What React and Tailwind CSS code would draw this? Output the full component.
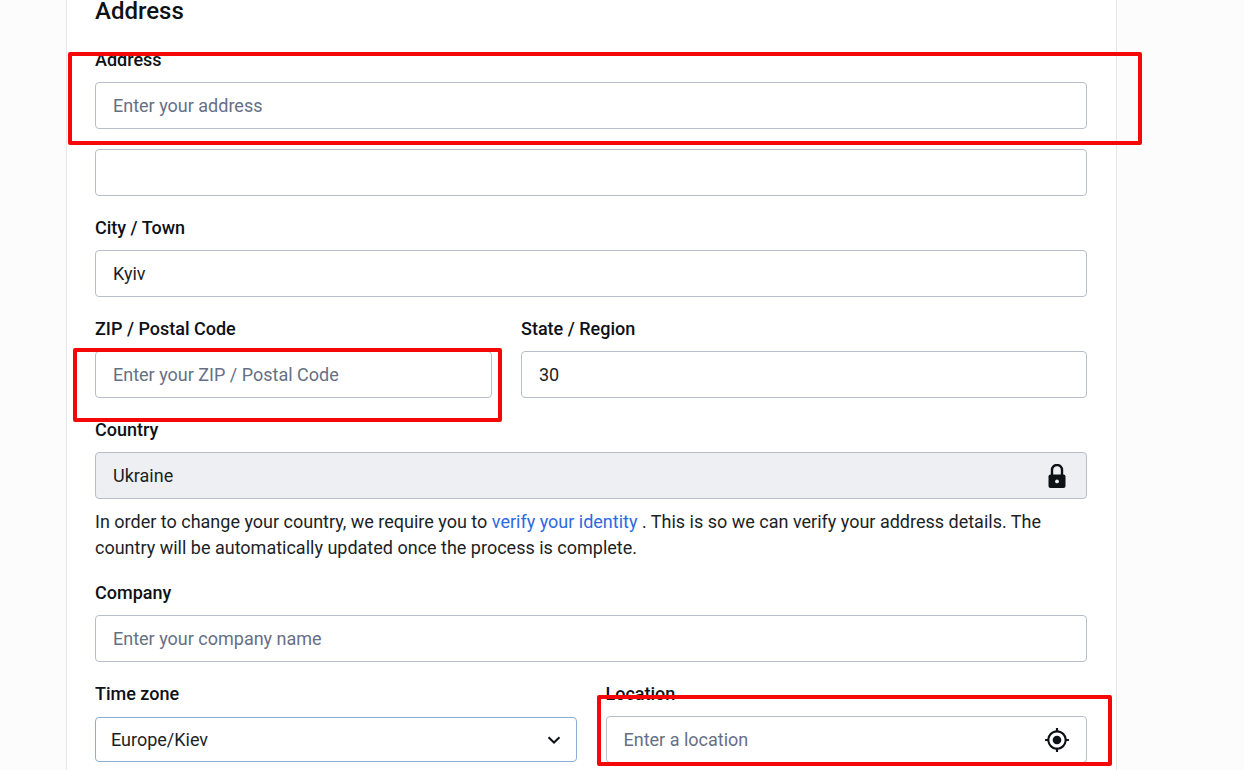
import { MdMyLocation } from 'react-icons/md';

const control =
  'block w-full h-[47px] rounded-[4px] border border-[#b7bec9] bg-white px-[17px] text-[18px] text-[#1c1f26] placeholder:text-[#667085] placeholder:opacity-100 outline-none focus:border-[#7fa6d9]';

function Label({ htmlFor, children }) {
  return (
    <label htmlFor={htmlFor} className="mb-[9px] block text-[18px] leading-[26px] font-medium text-[#0e1116]">
      {children}
    </label>
  );
}

function Field({ id, label, children, ...props }) {
  return (
    <div className="relative">
      <Label htmlFor={id}>{label}</Label>
      <input id={id} type="text" className={control} {...props} />
      {children}
    </div>
  );
}

function Highlight({ className }) {
  return (
    <div
      aria-hidden="true"
      className={`pointer-events-none absolute rounded-[2px] border-4 border-[#f40808] ${className}`}
    />
  );
}

function LockIcon() {
  return (
    <svg width="18" height="24" viewBox="0 0 18 24" aria-hidden="true">
      <path d="M4 11V6a5 5 0 0 1 10 0v5" fill="none" stroke="#0e1116" strokeWidth="2.4" />
      <rect x="0.5" y="10.5" width="17" height="13.5" rx="2" fill="#0e1116" />
      <circle cx="9" cy="17.4" r="1.9" fill="#eeeff3" />
    </svg>
  );
}

export default function App() {
  return (
    <div className="min-h-screen overflow-x-hidden bg-[#fcfcfc] pr-[127px] pl-[66px] font-['Roboto',sans-serif] text-[#1c1f26]">
      <main className="min-h-screen border-x border-[#e6e7ea] bg-white pr-[29px] pl-7">
        <h2 className="mb-[25px] text-[24px] leading-[22px] font-medium text-[#0e1116]">Address</h2>
        <form className="flex flex-col gap-[19px]">
          <div className="flex flex-col gap-5">
            <Field id="address" label="Address" placeholder="Enter your address">
              <Highlight className="top-[5px] -right-[55px] -bottom-4 -left-[27px]" />
            </Field>
            <input type="text" aria-label="Address line 2" className={control} />
          </div>

          <Field id="city" label="City / Town" defaultValue="Kyiv" />

          <div className="grid grid-cols-[397fr_566fr] gap-[29px]">
            <Field id="zip" label="ZIP / Postal Code" placeholder="Enter your ZIP / Postal Code">
              <Highlight className="top-8 -right-[10px] -bottom-6 -left-[22px]" />
            </Field>
            <Field id="state" label="State / Region" defaultValue="30" />
          </div>

          <div>
            <Label htmlFor="country">Country</Label>
            <div className="flex h-[47px] items-center rounded-[4px] border border-[#b7bec9] bg-[#eeeff3] pr-5 pl-[17px]">
              <input
                id="country"
                type="text"
                readOnly
                defaultValue="Ukraine"
                className="min-w-0 flex-1 bg-transparent text-[18px] outline-none"
              />
              <LockIcon />
            </div>
            <p className="mt-[10px] text-[18px] leading-[26px]">
              In order to change your country, we require you to{' '}
              <a href="#verify" className="text-[#2f6ae0]">
                verify your identity
              </a>{' '}
              . This is so we can verify your address details. The country will be automatically updated once the
              process is complete.
            </p>
          </div>

          <Field id="company" label="Company" placeholder="Enter your company name" />

          <div className="grid grid-cols-2 gap-[29px]">
            <div>
              <Label htmlFor="timezone">Time zone</Label>
              <div className="grid h-[47px] items-center">
                <select
                  id="timezone"
                  className="col-start-1 row-start-1 h-[45px] w-full appearance-none rounded-[4px] border border-[#8badd4] bg-white px-[15px] text-[18px] outline-none"
                >
                  <option>Europe/Kiev</option>
                </select>
                <svg
                  width="14"
                  height="8"
                  viewBox="0 0 14 8"
                  aria-hidden="true"
                  className="pointer-events-none col-start-1 row-start-1 mr-4 justify-self-end"
                >
                  <path d="M1.5 1.2 7 6.5l5.500-5.300" fill="none" stroke="#0e1116" strokeWidth="2" />
                </svg>
              </div>
            </div>
            <div className="relative">
              <Label htmlFor="location">Location</Label>
              <div className="flex h-[47px] items-center rounded-[4px] border border-[#b7bec9] bg-white pr-4 pl-[17px]">
                <input
                  id="location"
                  type="text"
                  placeholder="Enter a location"
                  className="min-w-0 flex-1 bg-transparent text-[18px] outline-none placeholder:text-[#667085] placeholder:opacity-100"
                />
                <button type="button" aria-label="Use my current location" className="text-[#0e1116]">
                  <MdMyLocation size={26} />
                </button>
              </div>
              <Highlight className="top-[14px] -right-[25px] -bottom-[3px] -left-[9px]" />
            </div>
          </div>
        </form>
      </main>
    </div>
  );
}
